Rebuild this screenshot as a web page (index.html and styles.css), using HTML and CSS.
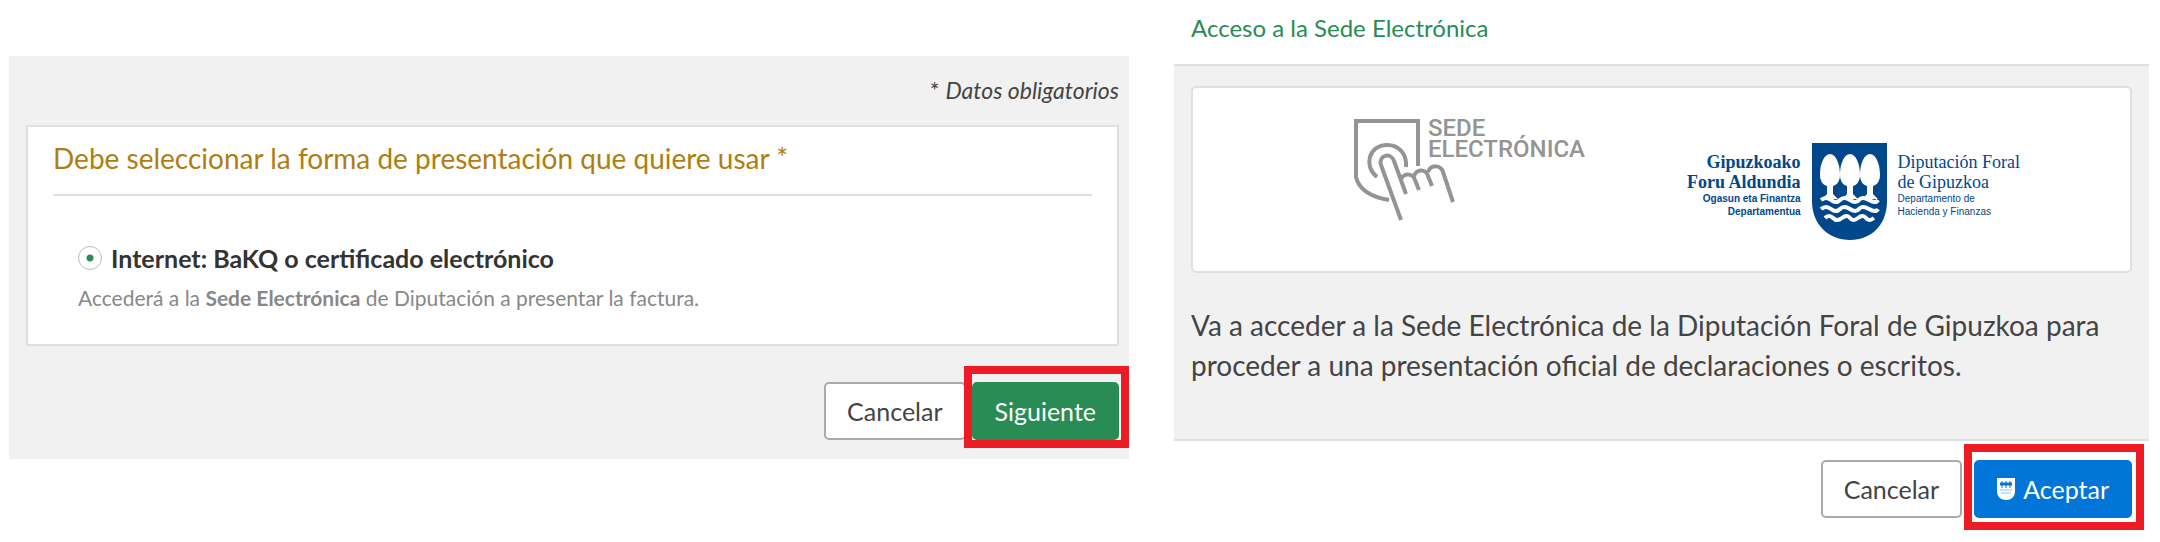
FILE: index.html
```html
<!DOCTYPE html>
<html lang="es">
<head>
    <meta charset="UTF-8">
    <title>Acceso a la Sede Electrónica</title>
    <link rel="stylesheet" href="styles.css">
</head>
<body>
<div class="page">
    <form class="panel">
        <p class="required">* <em>Datos obligatorios</em></p>
        <fieldset class="box options">
            <h2 class="question" id="question">Debe seleccionar la forma de presentación que quiere usar *</h2>
            <div class="option">
                <label class="option-label"><input type="radio" class="radio" name="forma" checked> Internet: BaKQ o certificado electrónico</label>
                <p class="hint">Accederá a la <strong>Sede Electrónica</strong> de Diputación a presentar la factura.</p>
            </div>
        </fieldset>
        <div class="actions">
            <button type="button" class="btn">Cancelar</button>
            <span class="mark mark-next"><button type="button" class="btn btn-green">Siguiente</button></span>
        </div>
    </form>

    <section class="modal">
        <h1 class="modal-title">Acceso a la Sede Electrónica</h1>
        <div class="modal-body">
            <div class="box logos">
                <div class="sede">
                    <svg class="sede-icon" width="102" height="104" viewBox="0 0 102 104" fill="none" stroke="#949492" stroke-width="4">
                        <path d="M65 48V3H3v56c3 13 15 20 33 23"/>
                        <path d="M24 59C10 48 16 27 34 27c13 0 20 10 19 22"/>
                        <path stroke-linejoin="round" d="M48 102L28 47c-3-10 10-13 13-4l12 33M48 63c0-8 12-9 14-1l4 10M61 59c1-8 12-9 14-1l4 10M75 54c3-8 13-7 15 0l10 30"/>
                    </svg>
                    <p class="sede-name">SEDE<br>ELECTRÓNICA</p>
                </div>
                <div class="dfg">
                    <p class="dfg-text dfg-eu">Gipuzkoako<br>Foru Aldundia<small>Ogasun eta Finantza<br>Departamentua</small></p>
                    <svg class="shield" width="75" height="97" viewBox="0 0 75 97">
                        <path fill="#00478b" d="M0 0h75v58c0 24-16 39-37 39S0 82 0 58z"/>
                        <g fill="#fff">
                            <path id="tree" d="M18 11c6 0 10 10 10 21 0 6-3 10-7 11v8l5 5H10l5-5v-8c-4-1-7-5-7-11 0-11 4-21 10-21z"/>
                            <use href="#tree" x="20"/>
                            <use href="#tree" x="40"/>
                        </g>
                        <path fill="none" stroke="#fff" stroke-width="4" d="M9 57q5-4 10 0t9 0 10 0 9 0 10 0 9 0M9 66q5-4 10 0t9 0 10 0 9 0 10 0 9 0M13 75q4-4 8 0t9 0 8 0 8 0 8 0 8 0"/>
                    </svg>
                    <p class="dfg-text">Diputación Foral<br>de Gipuzkoa<small>Departamento de<br>Hacienda y Finanzas</small></p>
                </div>
            </div>
            <p class="message">Va a acceder a la Sede Electrónica de la Diputación Foral de Gipuzkoa para proceder a una presentación oficial de declaraciones o escritos.</p>
        </div>
        <div class="actions modal-actions">
            <button type="button" class="btn">Cancelar</button>
            <span class="mark mark-accept"><button type="button" class="btn btn-blue">
                <svg class="btn-icon" width="18" height="22" viewBox="0 0 18 22"><path fill="#fff" d="M0 0h18v13c0 6-4 9-9 9s-9-3-9-9z"/><path fill="none" stroke="#0275d8" d="M5 3v7M9 3v7M13 3v7"/><path fill="none" stroke="#0275d8" stroke-width="3" d="M3 6h12"/><path fill="none" stroke="#8cc0ee" d="M3 12h12M4 15h10"/></svg>
                Aceptar</button></span>
        </div>
    </section>
</div>
</body>
</html>
```
FILE: styles.css
```css
*{
    box-sizing: border-box;
}
body{
    margin: 0;
    background: #fff;
    color: #444;
    font-family: Lato, "Liberation Sans", sans-serif;
    font-size: 24px;
}
h1, h2, p{
    margin: 0;
    font-weight: normal;
}
.page{
    display: grid;
    grid-template-columns: 1120fr 975fr;
    gap: 45px;
    align-items: start;
    min-height: 100vh;
    padding: 0 11px 0 9px;
}
.box{
    background: #fff;
    border: 2px solid #e0e0e0;
}

/* formulario */
.panel{
    margin-top: 56px;
    padding: 14px 10px 19px 17px;
    background: #f1f1f1;
}
.required{
    font-size: 23px;
    line-height: 40px;
    text-align: right;
}
.options{
    margin: 15px 0 36px;
    padding: 11px 25px 26px;
}
.question{
    padding-bottom: 16px;
    border-bottom: 2px solid #e0e0e0;
    color: #b07d12;
    font-size: 28px;
    line-height: 40px;
}
.option{
    padding: 42px 25px 0;
}
.option-label{
    display: flex;
    align-items: center;
    gap: 9px;
    color: #333;
    font-size: 25px;
    font-weight: bold;
    line-height: 40px;
}
.radio{
    appearance: none;
    width: 24px;
    height: 24px;
    margin: 0;
    border: 1px solid #bbb;
    border-radius: 50%;
    background: radial-gradient(circle, #288c54 3px, #fff 4px);
}
.hint{
    color: #888;
    font-size: 21px;
    line-height: 40px;
}

/* botones */
.actions{
    display: flex;
    justify-content: flex-end;
    gap: 6px;
}
.btn{
    height: 58px;
    padding: 0 21px;
    border: 2px solid #aaa;
    border-radius: 5px;
    background: #fff;
    color: #444;
    font-family: inherit;
    font-size: 25px;
}
.btn-green{
    border-color: #288c54;
    background: #288c54;
    color: #fff;
}
.btn-blue{
    display: flex;
    align-items: center;
    gap: 8px;
    border-color: #0275d8;
    background: #0275d8;
    color: #fff;
}
.mark{
    position: relative;
}
.mark:after{
    content: "";
    position: absolute;
    border: 8px solid #ed1c24;
    pointer-events: none;
}
.mark-next:after{
    top: -16px;
    right: -10px;
    bottom: -8px;
    left: -8px;
}
.mark-accept:after{
    top: -16px;
    right: -12px;
    bottom: -12px;
    left: -10px;
}

/* ventana de acceso */
.modal-title{
    padding: 8px 17px 16px;
    color: #288c54;
    font-size: 24px;
    line-height: 40px;
}
.modal-body{
    padding: 20px 17px 54px;
    background: #f1f1f1;
    border-top: 2px solid #e0e0e0;
    border-bottom: 2px solid #e0e0e0;
}
.logos{
    display: flex;
    justify-content: center;
    gap: 102px;
    height: 187px;
    padding: 30px 0 0 50px;
    border-radius: 5px;
}
.sede{
    display: flex;
    align-items: flex-start;
    color: #949492;
}
.sede-name{
    margin-left: -27px;
    font-family: Roboto, sans-serif;
    font-size: 24px;
    font-weight: 500;
    line-height: 21px;
}
.dfg{
    display: flex;
    align-items: flex-start;
    gap: 11px;
    padding-top: 25px;
    color: #00478b;
}
.dfg-text{
    padding-top: 9px;
    font-family: "Liberation Serif", serif;
    font-size: 18px;
    line-height: 20px;
}
.dfg-text small{
    display: block;
    font-family: "Liberation Sans", sans-serif;
    font-size: 10px;
    line-height: 13px;
}
.dfg-eu{
    font-weight: bold;
    text-align: right;
}
.message{
    margin-top: 32px;
    font-size: 28px;
    line-height: 40px;
}
.modal-actions{
    gap: 12px;
    padding: 19px 17px 0;
}
```
